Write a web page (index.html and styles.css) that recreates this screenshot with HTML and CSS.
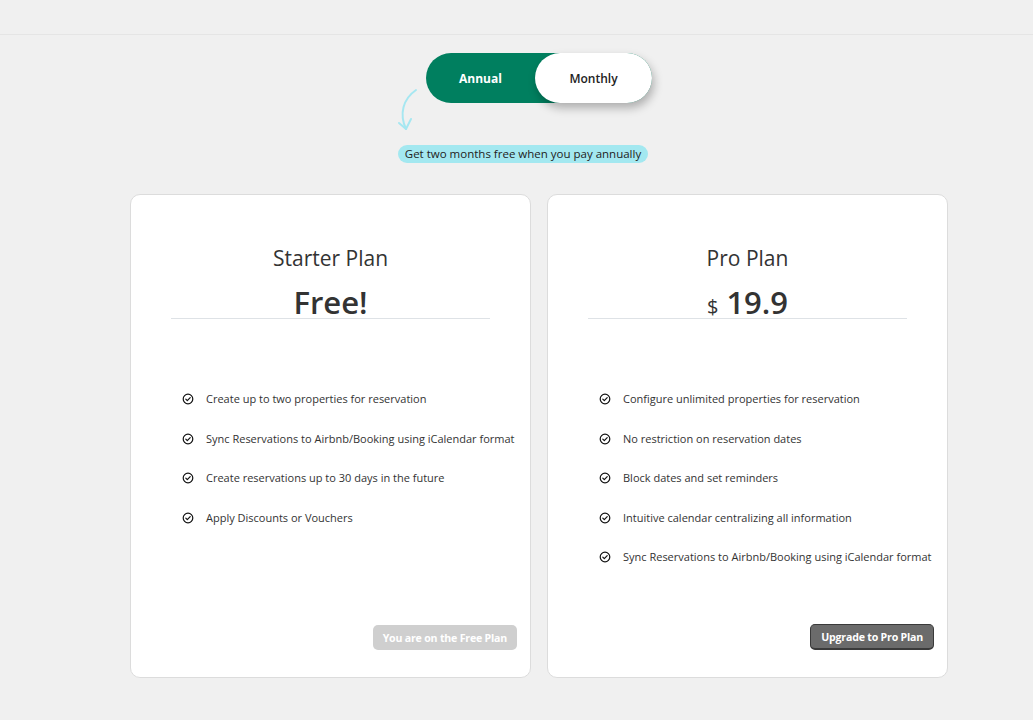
FILE: index.html
```html
<!DOCTYPE html>
<html lang="en">
<head>
<meta charset="utf-8">
<title>Pricing</title>
<link rel="stylesheet" href="styles.css">
</head>
<body>
<header class="topbar"></header>
<main class="wrap">
  <section class="hero">
    <div class="toggle">
      <span class="opt opt-active">Annual</span>
      <span class="opt opt-thumb">Monthly</span>
    </div>
    <svg class="hint-arrow" viewBox="0 0 26 48" width="26" height="48" fill="none" stroke="#a6e7f1" stroke-width="2" stroke-linecap="round" stroke-linejoin="round">
      <path d="M22 4 C 9 13, 5 28, 12 43"/>
      <path d="M5 37 L12 43 L17 33"/>
    </svg>
    <div class="badge-row"><span class="badge">Get two months free when you pay annually</span></div>
  </section>

  <section class="plans">
    <article class="card">
      <h2 class="plan-name">Starter Plan</h2>
      <div class="price">Free!</div>
      <hr class="divider">
      <ul class="features">
        <li><svg class="chk" viewBox="0 0 24 24"><circle cx="12" cy="12" r="9.6"/><path d="M7.6 12.4l3 3 5.8-6"/></svg>Create up to two properties for reservation</li>
        <li><svg class="chk" viewBox="0 0 24 24"><circle cx="12" cy="12" r="9.6"/><path d="M7.6 12.4l3 3 5.8-6"/></svg>Sync Reservations to Airbnb/Booking using iCalendar format</li>
        <li><svg class="chk" viewBox="0 0 24 24"><circle cx="12" cy="12" r="9.6"/><path d="M7.6 12.4l3 3 5.8-6"/></svg>Create reservations up to 30 days in the future</li>
        <li><svg class="chk" viewBox="0 0 24 24"><circle cx="12" cy="12" r="9.6"/><path d="M7.6 12.4l3 3 5.8-6"/></svg>Apply Discounts or Vouchers</li>
      </ul>
      <button class="btn btn-disabled" type="button">You are on the Free Plan</button>
    </article>

    <article class="card">
      <h2 class="plan-name">Pro Plan</h2>
      <div class="price"><span class="cur">$</span> 19.9</div>
      <hr class="divider">
      <ul class="features">
        <li><svg class="chk" viewBox="0 0 24 24"><circle cx="12" cy="12" r="9.6"/><path d="M7.6 12.4l3 3 5.8-6"/></svg>Configure unlimited properties for reservation</li>
        <li><svg class="chk" viewBox="0 0 24 24"><circle cx="12" cy="12" r="9.6"/><path d="M7.6 12.4l3 3 5.8-6"/></svg>No restriction on reservation dates</li>
        <li><svg class="chk" viewBox="0 0 24 24"><circle cx="12" cy="12" r="9.6"/><path d="M7.6 12.4l3 3 5.8-6"/></svg>Block dates and set reminders</li>
        <li><svg class="chk" viewBox="0 0 24 24"><circle cx="12" cy="12" r="9.6"/><path d="M7.6 12.4l3 3 5.8-6"/></svg>Intuitive calendar centralizing all information</li>
        <li><svg class="chk" viewBox="0 0 24 24"><circle cx="12" cy="12" r="9.6"/><path d="M7.6 12.4l3 3 5.8-6"/></svg>Sync Reservations to Airbnb/Booking using iCalendar format</li>
      </ul>
      <button class="btn btn-primary" type="button">Upgrade to Pro Plan</button>
    </article>
  </section>
</main>
</body>
</html>
```

FILE: styles.css
```css
* { box-sizing: border-box; }

html, body {
  margin: 0;
  padding: 0;
  background: #f0f0f0;
}

body {
  font-family: "Open Sans", "Noto Sans", "Liberation Sans", sans-serif;
  color: #333;
}

.topbar {
  height: 35px;
  border-bottom: 1px solid #e5e5e5;
}

.wrap {
  width: 818px;
  margin-left: 130px;
}

.hero {
  position: relative;
  padding-top: 18px;
}

.toggle {
  display: flex;
  width: 226px;
  height: 50px;
  margin: 0 auto;
  background: #007f5f;
  border-radius: 25px;
}

.opt {
  display: flex;
  align-items: center;
  justify-content: center;
  font-size: 12px;
}

.opt-active {
  width: 109px;
  color: #fff;
  font-weight: 700;
}

.opt-thumb {
  width: 117px;
  background: #fff;
  color: #222;
  font-weight: 600;
  border-radius: 25px;
  box-shadow: 2px 5px 10px rgba(0, 0, 0, 0.28);
}

.hint-arrow {
  position: absolute;
  left: 264px;
  top: 51px;
}

.badge-row {
  display: flex;
  justify-content: center;
  padding-right: 32px;
  margin-top: 42px;
}

.badge {
  display: inline-block;
  background: #a3e8f0;
  color: #222;
  font-size: 11.5px;
  line-height: 18px;
  padding: 0 7px;
  border-radius: 9px;
}

.plans {
  display: grid;
  grid-template-columns: 401px 401px;
  gap: 16px;
  margin-top: 31px;
}

.card {
  display: flex;
  flex-direction: column;
  height: 484px;
  background: #fff;
  border: 1px solid #dcdcdc;
  border-radius: 10px;
  padding: 48px 13px 27px;
}

.plan-name {
  margin: 0;
  text-align: center;
  font-size: 21px;
  font-weight: 400;
  line-height: 30px;
  color: #333;
}

.price {
  margin-top: 13px;
  text-align: center;
  font-size: 31px;
  font-weight: 600;
  line-height: 32px;
  height: 32px;
  color: #333;
}

.cur {
  font-size: 20px;
  font-weight: 400;
}

.divider {
  margin: 0 27px;
  border: 0;
  border-top: 1px solid #dee2e6;
}

.features {
  list-style: none;
  margin: 70px 0 0;
  padding: 0 0 0 38px;
}

.features li {
  display: flex;
  align-items: center;
  font-size: 11px;
  line-height: 20px;
  margin-bottom: 19.5px;
  color: #333;
  white-space: nowrap;
}

.chk {
  width: 12px;
  height: 12px;
  margin-right: 12px;
  flex: none;
  fill: none;
  stroke: #111;
  stroke-width: 2.4;
  stroke-linecap: round;
  stroke-linejoin: round;
}

.btn {
  margin-top: auto;
  align-self: flex-end;
  height: 26px;
  padding: 0 10px;
  border-radius: 5px;
  font-family: inherit;
  font-size: 10.6px;
  font-weight: 700;
  color: #fff;
  letter-spacing: -0.2px;
}

.btn-disabled {
  background: #cfcfcf;
  border: 0;
  height: 25px;
}

.btn-primary {
  background: #6b6b6b;
  border: 1px solid #3a3a3a;
  border-bottom-width: 2px;
}
```
